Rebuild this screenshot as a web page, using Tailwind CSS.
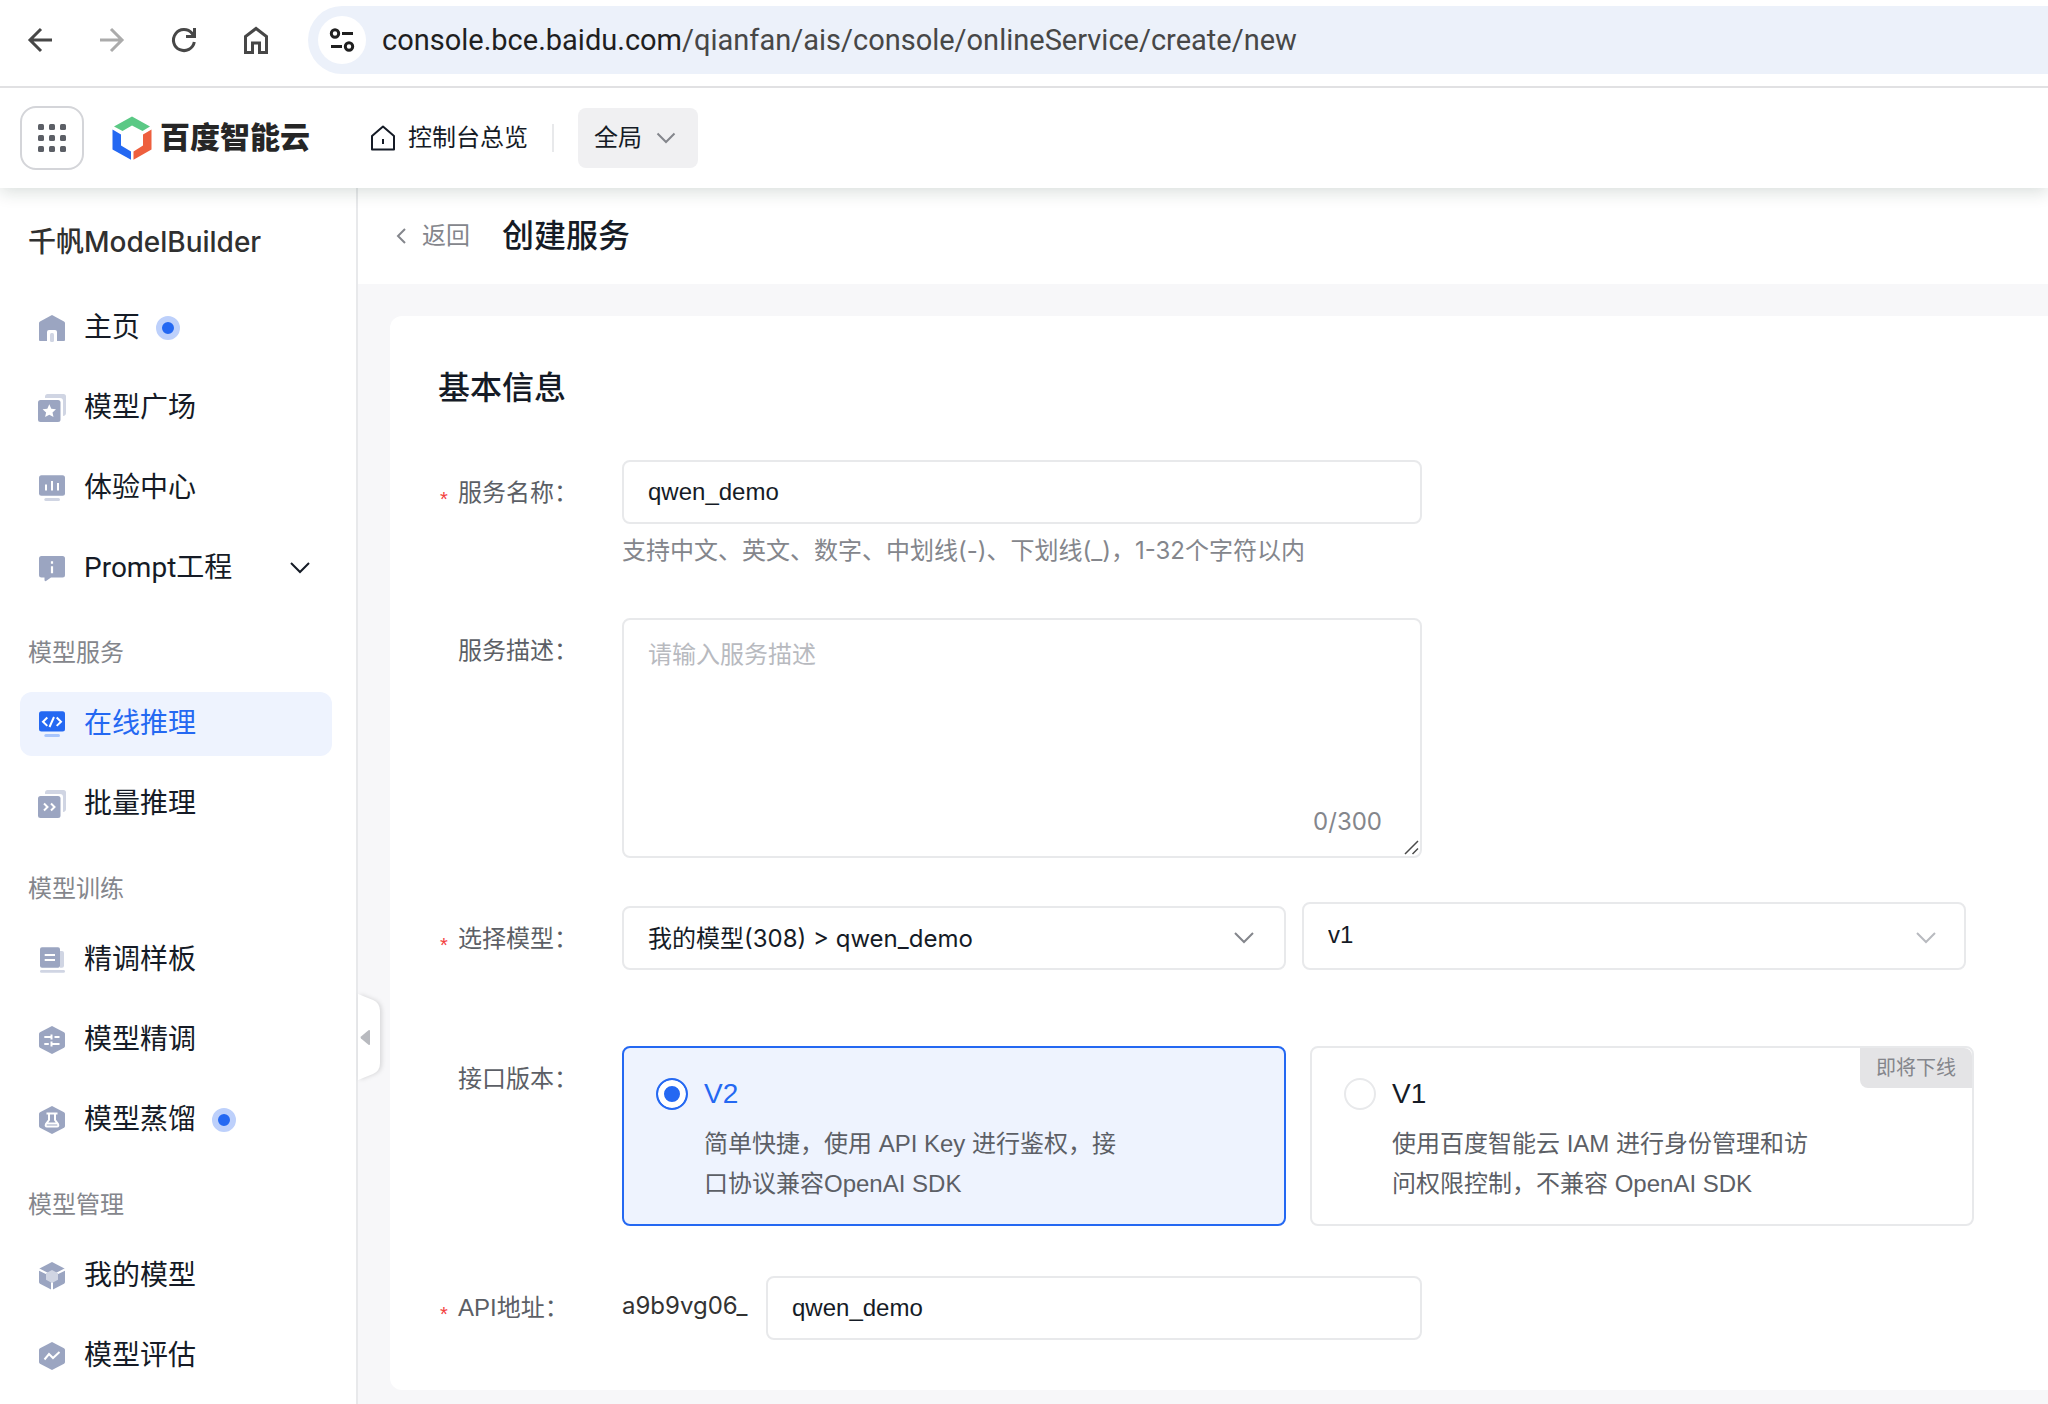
<!DOCTYPE html>
<html lang="zh-CN">

<head>
    <meta charset="UTF-8">
    <meta name="viewport" content="width=device-width, initial-scale=1.0">
    <title>创建服务 - 百度智能云千帆</title>
    <script src="https://cdn.jsdelivr.net/npm/@tailwindcss/browser@4"></script>
</head>

<body class="flex h-screen flex-col overflow-hidden bg-white font-['Liberation_Sans','Noto_Sans_CJK_SC',sans-serif] text-2xl text-[#151b26]">

    <!-- Browser toolbar -->
    <div class="relative z-30 flex h-[88px] shrink-0 items-center border-b-2 border-[#e1e1e3] bg-white pb-[6px] pl-6 text-[#474747]">
        <button class="mr-10 size-8" aria-label="后退">
            <svg viewBox="0 0 32 32" fill="none" stroke="currentColor" stroke-width="3">
                <path d="M28 16H6M17 5L6 16l11 11" />
            </svg>
        </button>
        <button class="mr-10 size-8 text-[#ababab]" aria-label="前进">
            <svg viewBox="0 0 32 32" fill="none" stroke="currentColor" stroke-width="3">
                <path d="M4 16h22M15 5l11 11-11 11" />
            </svg>
        </button>
        <button class="mr-10 size-8" aria-label="刷新">
            <svg viewBox="0 0 32 32" fill="none" stroke="currentColor" stroke-width="3">
                <path d="M26.300 18A10.500 10.500 0 1 1 24 9.300l1.500 2M26.500 4v8.500H18" />
            </svg>
        </button>
        <button class="mr-9 size-8" aria-label="主页">
            <svg viewBox="0 0 32 32" fill="none" stroke="currentColor" stroke-width="3">
                <path d="M5.500 28.500V12.500L16 4.500l10.500 8v16H19.500v-9.500h-7v9.500z" />
            </svg>
        </button>
        <div class="flex h-[68px] flex-1 items-center rounded-l-full bg-[#ecf1fa] pl-[10px]">
            <button class="mr-4 flex size-12 items-center justify-center rounded-full bg-white text-[#1f1f1f]" aria-label="网站信息">
                <svg class="size-7" viewBox="0 0 28 28" fill="none" stroke="currentColor" stroke-width="3">
                    <circle cx="7" cy="7.500" r="3.700" />
                    <path d="M14 7.500h11M3 20.500h11" />
                    <circle cx="21" cy="20.500" r="3.700" />
                </svg>
            </button>
            <div class="font-['Roboto',sans-serif] text-[29px] text-[#474747]"><span class="text-[#1f1f1f]">console.bce.baidu.com</span>/qianfan/ais/console/onlineService/create/new</div>
        </div>
    </div>

    <!-- Console header -->
    <header class="relative z-20 flex h-[100px] shrink-0 items-center bg-white pl-5 shadow-[0_4px_16px_rgba(20,50,40,0.16)]">
        <button class="flex size-16 items-center justify-center rounded-2xl border-2 border-[#d4d5d9]" aria-label="产品导航">
            <svg class="size-7" viewBox="0 0 28 28" fill="#5c5f66">
                <rect x="0" y="0" width="6" height="6" rx="1.500" />
                <rect x="11" y="0" width="6" height="6" rx="1.500" />
                <rect x="22" y="0" width="6" height="6" rx="1.500" />
                <rect x="0" y="11" width="6" height="6" rx="1.500" />
                <rect x="11" y="11" width="6" height="6" rx="1.500" />
                <rect x="22" y="11" width="6" height="6" rx="1.500" />
                <rect x="0" y="22" width="6" height="6" rx="1.500" />
                <rect x="11" y="22" width="6" height="6" rx="1.500" />
                <rect x="22" y="22" width="6" height="6" rx="1.500" />
            </svg>
        </button>
        <a href="#" class="ml-7 flex items-center gap-2 text-[30px] font-black text-[#262626]">
            <svg class="h-11 w-10" viewBox="0 0 40 44">
                <path fill="#5bc985" d="M20 .500L38 10.500l-7.500 4.500-10.500-5.500-9.500 5.500L2 10.500z" />
                <path fill="#2468f2" d="M.500 13.500l8.500 5v11l10 6v8.200L.500 33.500z" />
                <path fill="#ee5f3e" d="M39.500 13.500l-8.500 5v11l-9.500 6v8.200l18-10.200z" />
            </svg>
            百度智能云
        </a>
        <a href="#" class="ml-[60px] flex items-center gap-3">
            <svg class="size-[26px]" viewBox="0 0 26 26" fill="none" stroke="currentColor" stroke-width="2">
                <path d="M2 11L13 1.500 24 11v13.500H2zM13 14v5" stroke-linejoin="round" />
            </svg>
            控制台总览
        </a>
        <div class="mx-6 h-7 w-[2px] bg-[#e8e9eb]"></div>
        <button class="flex h-[60px] items-center gap-[14px] rounded-lg bg-[#f0f0f2] pl-4 pr-[22px]">
            全局
            <svg class="h-3 w-5" viewBox="0 0 20 12" fill="none" stroke="#84868c" stroke-width="2">
                <path d="M1.500 1.500L10 10l8.500-8.500" />
            </svg>
        </button>
    </header>

    <div class="flex min-h-0 flex-1">
        <!-- Sidebar -->
        <nav class="w-[358px] shrink-0 overflow-hidden border-r-2 border-[#e8e9eb] pl-5 pr-6 font-['Roboto','Noto_Sans_CJK_SC',sans-serif] text-[28px]">
            <h2 class="pl-2 font-['Inter','Noto_Sans_CJK_SC',sans-serif] font-medium leading-[108px] text-[#303030]">千帆ModelBuilder</h2>

            <a href="#" class="mb-4 flex h-16 items-center gap-[18px] rounded-xl pl-[18px]">
                <svg class="size-7" viewBox="0 0 28 28">
                    <path fill="#9ba5c1" d="M14 1l12 6.500q1 .600 1 1.500v17q0 1-1 1H2q-1 0-1-1V9q0-.900 1-1.500z" />
                    <path fill="#fff" d="M9 28V18q0-2 2-2h6q2 0 2 2v10z" />
                    <rect fill="#d0d5e3" x="12" y="19" width="4" height="9" rx="1.500" />
                </svg>
                <span class="flex items-center gap-4">主页<i class="size-6 rounded-full border-6 border-[#bdd0fb] bg-[#2468f2]"></i></span>
            </a>
            <a href="#" class="mb-4 flex h-16 items-center gap-[18px] rounded-xl pl-[18px]">
                <svg class="size-7" viewBox="0 0 28 28">
                    <path fill="#d0d5e3" d="M7 2q.500-2 2.500-2H25.500Q28 0 28 2.500V19q0 2.500-3 3V7q0-3-3-3H7z" />
                    <rect fill="#9ba5c1" x="0" y="6" width="22.500" height="22" rx="2.500" />
                    <path fill="#fff" d="M11.300 10.300l2 4.400 4.700.500-3.500 3.200 1 4.700-4.200-2.400-4.200 2.400 1-4.700-3.500-3.200 4.700-.500z" />
                </svg>
                模型广场
            </a>
            <a href="#" class="mb-4 flex h-16 items-center gap-[18px] rounded-xl pl-[18px]">
                <svg class="size-7" viewBox="0 0 28 28">
                    <rect fill="#9ba5c1" x="1" y="1.300" width="26" height="20.400" rx="2.500" />
                    <rect fill="#d0d5e3" x="6.300" y="24" width="15.700" height="3" rx="1.500" />
                    <path stroke="#fff" stroke-width="2" d="M8 10.500v6M14 7v9.500M20 9v7.500" />
                </svg>
                体验中心
            </a>
            <a href="#" class="mb-4 flex h-16 items-center gap-[18px] rounded-xl pl-[18px] pr-[22px]">
                <svg class="size-7" viewBox="0 0 28 28">
                    <path fill="#9ba5c1" d="M3.500 2h21Q27 2 27 4.500v16.500q0 2.500-2.500 2.500H13l-5 3.500q-1.500.500-1.500-1v-2.500h-3Q1 23.500 1 21V4.500Q1 2 3.500 2z" />
                    <path stroke="#fff" stroke-width="2.200" d="M14 7.300v2.400M14 12.300v7" />
                </svg>
                <span class="flex-1">Prompt工程</span>
                <svg class="h-3 w-5" viewBox="0 0 20 12" fill="none" stroke="currentColor" stroke-width="2">
                    <path d="M1 1l9 9 9-9" />
                </svg>
            </a>

            <h3 class="h-[76px] pl-2 text-2xl leading-[74px] text-[#84868c]">模型服务</h3>
            <a href="#" class="mb-4 flex h-16 items-center gap-[18px] rounded-xl bg-[#eef3fe] pl-[18px] text-[#2468f2]">
                <svg class="size-7" viewBox="0 0 28 28" fill="none">
                    <rect fill="#2468f2" x="1" y="1.300" width="26" height="20.200" rx="2.500" />
                    <rect fill="#a8c5fc" x="6.300" y="24" width="15.700" height="3" rx="1.500" />
                    <path stroke="#fff" stroke-width="2" d="M9.300 7.500L5 11.700l4.300 4.200M16 7l-4.500 10M18.700 7.500l4.300 4.200-4.300 4.200" />
                </svg>
                在线推理
            </a>
            <a href="#" class="mb-4 flex h-16 items-center gap-[18px] rounded-xl pl-[18px]">
                <svg class="size-7" viewBox="0 0 28 28" fill="none">
                    <path fill="#d0d5e3" d="M7 2q.500-2 2.500-2H25.500Q28 0 28 2.500V19q0 2.500-3 3V7q0-3-3-3H7z" />
                    <rect fill="#9ba5c1" x="0" y="6" width="22.500" height="22" rx="2.500" />
                    <path stroke="#fff" stroke-width="2" d="M6 13.500l3.500 3.500L6 20.500M13 13.500l3.500 3.500-3.500 3.500" />
                </svg>
                批量推理
            </a>

            <h3 class="h-[76px] pl-2 text-2xl leading-[74px] text-[#84868c]">模型训练</h3>
            <a href="#" class="mb-4 flex h-16 items-center gap-[18px] rounded-xl pl-[18px]">
                <svg class="size-7" viewBox="0 0 28 28">
                    <path fill="#d0d5e3" d="M22 5h2q2 0 2 2v12.700q0 2-2 2h-2z" />
                    <rect fill="#9ba5c1" x="2" y="1.300" width="20" height="20.400" rx="2" />
                    <rect fill="#d0d5e3" x="2" y="24" width="25" height="2.800" rx="1.400" />
                    <path stroke="#fff" stroke-width="2.200" d="M6.700 9H17M6.700 14H17" />
                </svg>
                精调样板
            </a>
            <a href="#" class="mb-4 flex h-16 items-center gap-[18px] rounded-xl pl-[18px]">
                <svg class="size-7" viewBox="0 0 28 28">
                    <path fill="#9ba5c1" d="M14 0l12 6.300q1 .600 1 1.700v12q0 1.100-1 1.700L14 28 2 21.700q-1-.600-1-1.700V8q0-1.100 1-1.700z" />
                    <path stroke="#fff" stroke-width="2" d="M6.300 11H14M13.500 8.500v5M16.500 11h5M6.300 18h4.500M13.500 15.500v5M13.500 18h8" />
                </svg>
                模型精调
            </a>
            <a href="#" class="mb-4 flex h-16 items-center gap-[18px] rounded-xl pl-[18px]">
                <svg class="size-7" viewBox="0 0 28 28">
                    <path fill="#9ba5c1" d="M14 0l12 6.300q1 .600 1 1.700v12q0 1.100-1 1.700L14 28 2 21.700q-1-.600-1-1.700V8q0-1.100 1-1.700z" />
                    <path fill="none" stroke="#fff" stroke-width="2" d="M8.500 7.500h11M11 7.500v6.500l-3 4q-1 2.500 1 2.500h10q2 0 1-2.500l-3-4V7.500M8 17.500h12" />
                </svg>
                <span class="flex items-center gap-4">模型蒸馏<i class="size-6 rounded-full border-6 border-[#bdd0fb] bg-[#2468f2]"></i></span>
            </a>

            <h3 class="h-[76px] pl-2 text-2xl leading-[74px] text-[#84868c]">模型管理</h3>
            <a href="#" class="mb-4 flex h-16 items-center gap-[18px] rounded-xl pl-[18px]">
                <svg class="size-7" viewBox="0 0 28 28">
                    <path fill="#9ba5c1" d="M14 0l12 6.300q1 .600 1 1.700v12q0 1.100-1 1.700L14 28 2 21.700q-1-.600-1-1.700V8q0-1.100 1-1.700z" />
                    <path fill="none" stroke="#fff" stroke-width="2" d="M1 7.500L14 14l13-6.500M14 14v14" />
                    <path fill="#d0d5e3" d="M14 8l6 3.200v6.600L14 21l-6-3.200v-6.600z" />
                </svg>
                我的模型
            </a>
            <a href="#" class="flex h-16 items-center gap-[18px] rounded-xl pl-[18px]">
                <svg class="size-7" viewBox="0 0 28 28">
                    <path fill="#9ba5c1" d="M14 0l12 6.300q1 .600 1 1.700v12q0 1.100-1 1.700L14 28 2 21.700q-1-.600-1-1.700V8q0-1.100 1-1.700z" />
                    <path fill="none" stroke="#fff" stroke-width="2" d="M6.500 17.500L11 12l4 4 6.500-6" />
                </svg>
                模型评估
            </a>
        </nav>

        <main class="relative flex min-w-0 flex-1 flex-col bg-[#f7f7f9]">
            <!-- Sidebar collapse handle -->
            <button class="absolute left-0 top-[802px] drop-shadow-[2px_0_2px_rgba(0,0,0,0.12)]" aria-label="收起侧栏">
                <svg class="h-[94px] w-6" viewBox="0 0 24 94">
                    <path fill="#fff" d="M0 4l15 6q7 3 7 11v52q0 8-7 11L0 90z" />
                    <path fill="#b8babf" d="M12 41v13q0 1.500-1.500.700L3 48.500q-1-1 0-2l7.500-6.200Q12 39.500 12 41z" />
                </svg>
            </button>

            <div class="flex h-24 shrink-0 items-center bg-white pl-[38px]">
                <a href="#" class="flex items-center gap-4 text-[#84868c]">
                    <svg class="h-4 w-[10px]" viewBox="0 0 10 16" fill="none" stroke="currentColor" stroke-width="2">
                        <path d="M9 1L2 8l7 7" />
                    </svg>
                    返回
                </a>
                <h1 class="ml-8 text-[32px] font-medium">创建服务</h1>
            </div>

            <form class="ml-8 mt-8 rounded-l-xl bg-white px-12 pb-[50px] pt-12">
                <h2 class="mb-12 text-[32px] font-medium leading-[48px]">基本信息</h2>

                <div class="mb-10 flex">
                    <label for="name" class="flex h-16 w-[184px] shrink-0 items-center pt-[2px] text-[#5c5f66]"><span class="w-5 pl-[2px] pt-3 text-xl text-[#f33e3e]">*</span>服务名称：</label>
                    <div class="w-[800px]">
                        <input id="name" type="text" value="qwen_demo" class="block h-16 w-full rounded-lg border-2 border-[#e8e9eb] px-6 outline-none">
                        <p class="font-['Inter','Noto_Sans_CJK_SC',sans-serif] leading-[54px] text-[#84868c]">支持中文、英文、数字、中划线(-)、下划线(_)，1-32个字符以内</p>
                    </div>
                </div>

                <div class="mb-11 flex">
                    <label for="desc" class="flex h-16 w-[184px] shrink-0 items-center pl-5 pt-[2px] text-[#5c5f66]">服务描述：</label>
                    <div class="relative w-[800px]">
                        <textarea id="desc" maxlength="300" placeholder="请输入服务描述" class="block h-60 w-full resize-none rounded-lg border-2 border-[#e8e9eb] px-6 py-[19px] outline-none placeholder:text-[#b8babf]"></textarea>
                        <span class="absolute bottom-5 right-10 font-['Inter',sans-serif] text-[#84868c]">0/300</span>
                        <svg class="absolute bottom-[2px] right-[2px] size-4" viewBox="0 0 16 16" stroke="#4a4a4a" stroke-width="1.500">
                            <path d="M1 14L14 1M8.500 14L14 8.500" />
                        </svg>
                    </div>
                </div>

                <div class="mb-[76px] flex items-end">
                    <label for="model" class="flex h-16 w-[184px] shrink-0 items-center pt-[2px] text-[#5c5f66]"><span class="w-5 pl-[2px] pt-3 text-xl text-[#f33e3e]">*</span>选择模型：</label>
                    <div class="relative mr-4 w-[664px]">
                        <select id="model" class="block h-16 w-full appearance-none rounded-lg border-2 border-[#e8e9eb] bg-white px-6 pt-[2px] font-['Inter','Noto_Sans_CJK_SC',sans-serif] outline-none">
                            <option>我的模型(308) &gt; qwen_demo</option>
                        </select>
                        <svg class="pointer-events-none absolute right-8 top-[26px] h-3 w-5" viewBox="0 0 20 12" fill="none" stroke="#84868c" stroke-width="2">
                            <path d="M1 1l9 9 9-9" />
                        </svg>
                    </div>
                    <div class="relative w-[664px]">
                        <select aria-label="模型版本" class="block h-[68px] w-full appearance-none rounded-lg border-2 border-[#e8e9eb] bg-white px-6 pb-[2px] outline-none">
                            <option>v1</option>
                        </select>
                        <svg class="pointer-events-none absolute right-[30px] top-[30px] h-3 w-5" viewBox="0 0 20 12" fill="none" stroke="#b8babf" stroke-width="2">
                            <path d="M1 1l9 9 9-9" />
                        </svg>
                    </div>
                </div>

                <div class="mb-[50px] flex" role="radiogroup" aria-labelledby="version">
                    <span id="version" class="flex h-16 w-[184px] shrink-0 items-center pl-5 pt-[2px] text-[#5c5f66]">接口版本：</span>
                    <label class="mr-6 flex h-[180px] w-[664px] gap-4 rounded-lg border-2 border-[#2468f2] bg-[#eef3fe] px-8 pt-[26px]">
                        <input type="radio" name="version" checked class="mt-1 size-8 shrink-0 appearance-none rounded-full border-2 border-[#2468f2] bg-[#2468f2] shadow-[inset_0_0_0_6px_#fff]">
                        <span class="w-[432px]">
                            <span class="block text-[28px] leading-10 text-[#2468f2]">V2</span>
                            <span class="mt-[10px] block leading-10 text-[#5c5f66]">简单快捷，使用 API Key 进行鉴权，接口协议兼容OpenAI SDK</span>
                        </span>
                    </label>
                    <label class="relative flex h-[180px] w-[664px] gap-4 rounded-lg border-2 border-[#e8e9eb] px-8 pt-[26px]">
                        <input type="radio" name="version" class="mt-1 size-8 shrink-0 appearance-none rounded-full border-2 border-[#e8e9eb] bg-white">
                        <span class="w-[432px]">
                            <span class="block text-[28px] leading-10">V1</span>
                            <span class="mt-[10px] block leading-10 text-[#5c5f66]">使用百度智能云 IAM 进行身份管理和访问权限控制，不兼容 OpenAI SDK</span>
                        </span>
                        <span class="absolute right-0 top-0 rounded-bl-lg rounded-tr-lg bg-[#e4e4e6] px-4 text-xl leading-10 text-[#84868c]">即将下线</span>
                    </label>
                </div>

                <div class="flex">
                    <label for="api" class="flex h-16 w-[184px] shrink-0 items-center text-[#5c5f66]"><span class="w-5 pl-[2px] pt-3 text-xl text-[#f33e3e]">*</span>API地址：</label>
                    <div class="flex w-[800px]">
                        <span class="w-36 font-['Inter',sans-serif] leading-[60px] text-[#333]">a9b9vg06_</span>
                        <input id="api" type="text" value="qwen_demo" class="h-16 flex-1 rounded-lg border-2 border-[#e8e9eb] px-6 outline-none">
                    </div>
                </div>
            </form>
        </main>
    </div>
</body>

</html>
